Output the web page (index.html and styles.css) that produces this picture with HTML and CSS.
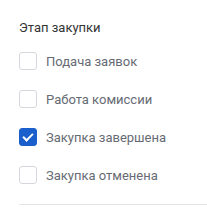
FILE: index.html
```html
<!DOCTYPE html>
<html>
<head>
    <meta charset="UTF-8">
    <title>Этап закупки</title>
    <link rel="stylesheet" href="styles.css">
</head>
<body>
    <div class="filter">
        <div class="filter_title">Этап закупки</div>
        <label class="check">
            <input type="checkbox">
            <span class="box"></span>
            <span class="text">Подача заявок</span>
        </label>
        <label class="check">
            <input type="checkbox">
            <span class="box"></span>
            <span class="text">Работа комиссии</span>
        </label>
        <label class="check">
            <input type="checkbox" checked>
            <span class="box"></span>
            <span class="text">Закупка завершена</span>
        </label>
        <label class="check">
            <input type="checkbox">
            <span class="box"></span>
            <span class="text">Закупка отменена</span>
        </label>
        <div class="divider"></div>
    </div>
</body>
</html>
```
FILE: styles.css
```css
body {
    margin: 0;
    background: #fff;
    font-family: Roboto, "Liberation Sans", sans-serif;
}
.filter {
    padding: 20px 0 0 19px;
}
.filter_title {
    font-size: 13px;
    line-height: 16px;
    color: #333;
    margin-bottom: 16px;
}
.check {
    display: flex;
    align-items: center;
    gap: 9px;
    height: 18px;
    margin-bottom: 20px;
    cursor: pointer;
}
.check input {
    display: none;
}
.box {
    width: 16px;
    height: 16px;
    border: 1px solid #d4d7dc;
    border-radius: 3px;
    box-sizing: content-box;
    position: relative;
}
.check input:checked + .box {
    background: #1a5fcb;
    border-color: #1a5fcb;
}
.check input:checked + .box:after {
    content: "";
    position: absolute;
    left: 5px;
    top: 2px;
    width: 4px;
    height: 8px;
    border: solid #fff;
    border-width: 0 2.5px 2.5px 0;
    transform: rotate(45deg);
}
.text {
    font-size: 13px;
    color: #666b73;
}
.divider {
    height: 1px;
    background: #e2e4e8;
    margin-top: 3px;
}
```
